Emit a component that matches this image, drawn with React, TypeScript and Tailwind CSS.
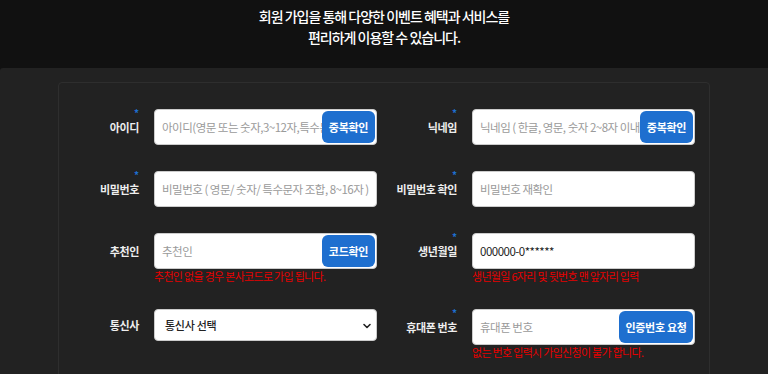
import React from 'react';

const font = { fontFamily: '"Noto Sans CJK KR", "Noto Sans", sans-serif' };

interface FieldProps {
  label: string;
  required?: boolean;
  placeholder?: string;
  value?: string;
  button?: string;
  buttonWidth?: string;
  hint?: string;
}

const Field: React.FC<FieldProps> = ({ label, required, placeholder, value, button, buttonWidth = 'w-[53px]', hint }) => (
  <div className="flex items-start">
    <div className="relative w-[80px] h-[36px] flex items-center justify-end">
      {required && <span className="absolute right-0 top-[-1px] text-[10px] font-bold leading-[9px] text-[#1e6fcf]">*</span>}
      <span className="text-[11px] leading-[12px] font-bold tracking-[-0.4px] text-[#eeeeee] whitespace-nowrap">{label}</span>
    </div>
    <div className="ml-[15px] w-[223px]">
      <div className="relative h-[36px] bg-white rounded-[4px] border border-[#cccccc] overflow-hidden">
        <input
          readOnly
          defaultValue={value}
          placeholder={placeholder}
          className="w-full h-full pl-[7px] pr-[2px] text-[11.5px] tracking-[-0.5px] text-[#222222] placeholder:text-[#9a9a9a] bg-transparent outline-none"
        />
        {button && (
          <button className={`absolute right-[1px] top-[1px] bottom-[1px] ${buttonWidth} rounded-[6px] bg-[#1e6fcf] text-white text-[11px] font-bold tracking-[-0.3px]`}>
            {button}
          </button>
        )}
      </div>
      {hint && <p className="text-[11px] leading-[14px] tracking-[-0.7px] text-[#e60000]">{hint}</p>}
    </div>
  </div>
);

const App: React.FC = () => {
  return (
    <div className="w-[768px] h-[374px] overflow-hidden bg-[#111111]" style={font}>
      <div className="h-[68px] flex flex-col items-center pt-[6px]">
        <p className="text-[14px] leading-[21px] font-medium tracking-[-1px] text-white">회원 가입을 통해 다양한 이벤트 혜택과 서비스를</p>
        <p className="text-[14px] leading-[21px] font-medium tracking-[-1px] text-white">편리하게 이용할 수 있습니다.</p>
      </div>
      <div className="bg-[#222222] rounded-tl-[3px] pt-[14px] h-[306px]">
        <div className="mx-[58px] border border-[#2e2e2e] rounded-[4px] h-[320px] pt-[26px] pr-[16px]">
          <div className="grid grid-cols-[318px_318px] gap-y-[26px]">
            <Field label="아이디" required placeholder="아이디(영문 또는 숫자,3~12자,특수문자 불가)" button="중복확인" />
            <Field label="닉네임" required placeholder="닉네임 ( 한글, 영문, 숫자 2~8자 이내 )" button="중복확인" />
            <Field label="비밀번호" required placeholder="비밀번호 ( 영문/ 숫자/ 특수문자 조합, 8~16자 )" />
            <Field label="비밀번호 확인" required placeholder="비밀번호 재확인" />
            <Field label="추천인" placeholder="추천인" button="코드확인" hint="추천인 없을 경우 본사코드로 가입 됩니다." />
            <Field label="생년월일" required value="000000-0******" hint="생년월일 6자리 및 뒷번호 맨 앞자리 입력" />
            <div className="flex items-start">
              <div className="w-[80px] h-[32px] flex items-center justify-end">
                <span className="text-[11px] font-bold tracking-[-0.4px] text-[#eeeeee]">통신사</span>
              </div>
              <div className="ml-[15px] w-[223px] relative h-[32px] bg-white rounded-[4px] border border-[#cccccc] flex items-center px-[10px]">
                <span className="text-[11px] font-medium tracking-[-0.3px] text-[#222222]">통신사 선택</span>
                <svg className="absolute right-[4px] top-[11px]" width="10" height="10" viewBox="0 0 10 10" fill="none">
                  <path d="M2 3.5 L5 6.5 L8 3.5" stroke="#222" strokeWidth="1.6" strokeLinecap="round" strokeLinejoin="round" />
                </svg>
              </div>
            </div>
            <Field label="휴대폰 번호" required placeholder="휴대폰 번호" button="인증번호 요청" buttonWidth="w-[74px]" hint="없는 번호 입력시 가입신청이 불가 합니다." />
          </div>
        </div>
      </div>
    </div>
  );
};

export default App;
